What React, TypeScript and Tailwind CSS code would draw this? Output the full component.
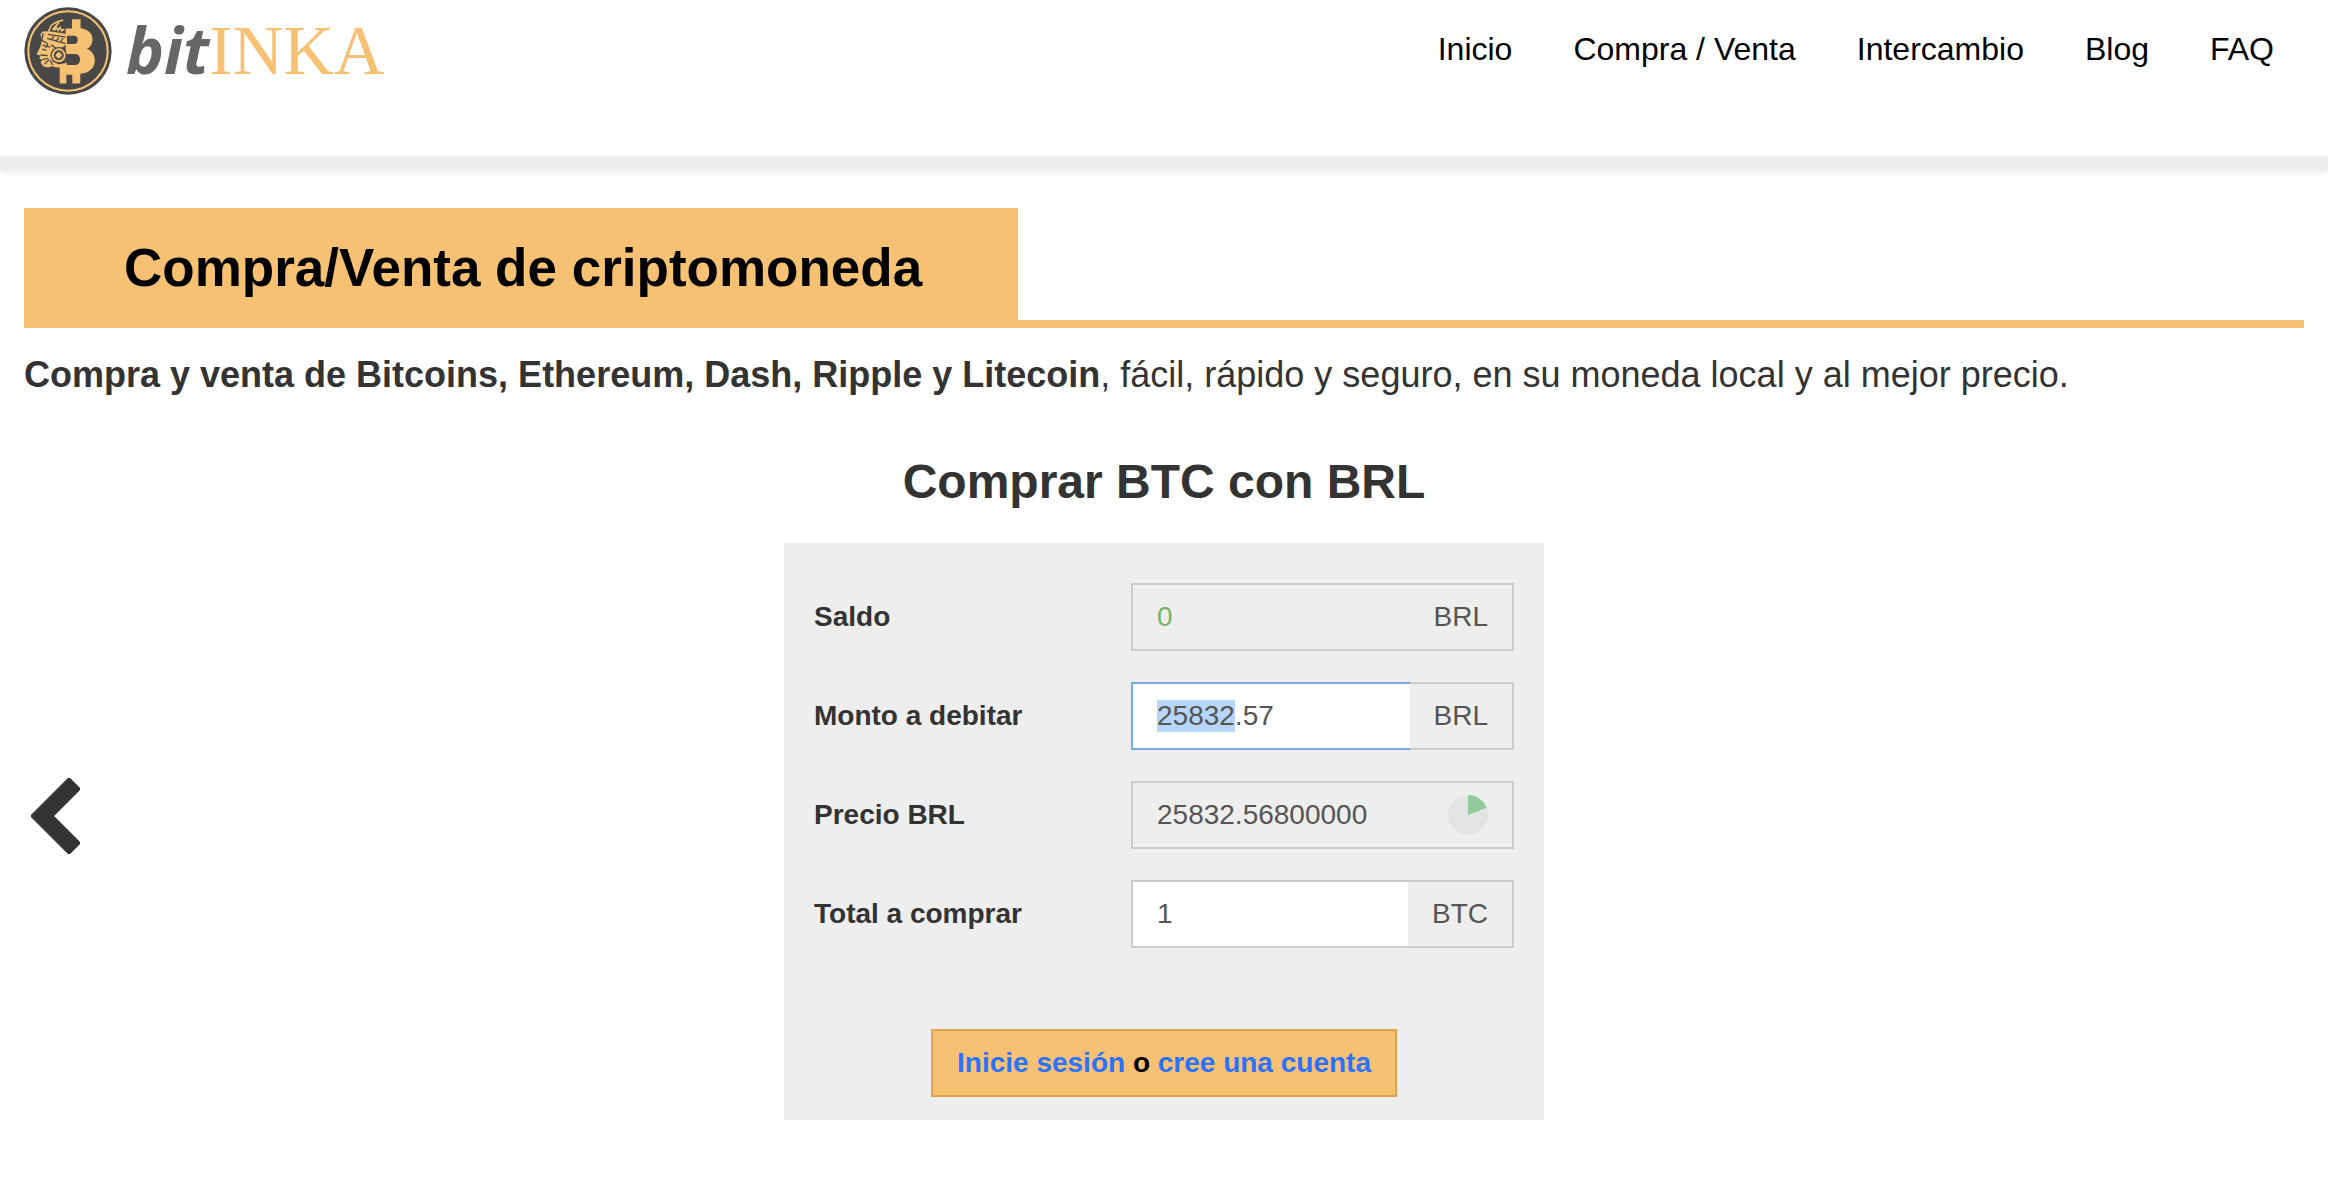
import { useEffect, useRef, useState } from 'react'
import { clsx } from 'clsx'

const navLinks = ['Inicio', 'Compra / Venta', 'Intercambio', 'Blog', 'FAQ']

function LogoMark() {
  return (
    <svg viewBox="12 17 266 266" className="size-[88px] shrink-0" aria-hidden="true">
      <circle cx="145" cy="150" r="132" fill="#484848" />
      <circle cx="145" cy="150" r="120" fill="none" stroke="#f6c172" strokeWidth="6" />
      {/* bitcoin sign */}
      <path
        fill="#f6c172"
        d="M157 54h26v27c24 3 36 17 36 32 0 16-6 25-17 30 16 6 24 20 24 36 0 22-16 38-44 40v29h-24v-26h-18v26h-20v-54h18V82h19z"
      />
      <path fill="#484848" d="M142 104h22c14 0 14 25 0 25h-22zM138 159h30c18 0 18 33 0 33h-30z" />
      {/* face */}
      <path
        fill="#f6c172"
        d="M62 100c0-6 6-10 14-10l24 2 38 6 4 30-12 10-18 6-16 14 2 22 18 10 26-4v10c-18 6-34 4-44 0l-14 4-14-4-8-12 6-6-10-6 4-8-12-4 12-24 4-16z"
      />
      <g fill="none" stroke="#f6c172" strokeWidth="5">
        <path d="M87 92c2-12 6-20 14-24s16-10 30-11M98 86l20-22M104 88l6-9 5 9 6-9 5 10 8-6" />
      </g>
      <g fill="none" stroke="#484848" strokeWidth="4">
        <path d="M70 96l-4 22 18 10M84 100l54 8M82 112l56 16M96 114l6-8M110 118l8-8M124 121l6-10" />
        <path d="M68 132l24 6M84 128l-6 12M66 144l14 4M94 130l14 12 12 2M62 162l22 2M68 176l18-4M74 190l14-14M90 178l10 14" />
      </g>
      <circle cx="117" cy="163" r="25" fill="#484848" />
      <circle cx="117" cy="163" r="18" fill="none" stroke="#f6c172" strokeWidth="6" />
      <path d="M117 154v18M108 163h18" stroke="#f6c172" strokeWidth="9" />
    </svg>
  )
}

function Header() {
  return (
    <header className="border-b-[14px] border-[#ededed] shadow-[0_3px_5px_#ededed]">
      <div className="flex h-[156px] items-start justify-between pl-6 pr-[54px]">
        <a href="#" className="flex items-center gap-[14px] pt-[6px]">
          <LogoMark />
          <span className="flex items-baseline leading-[88px]">
            <span className="font-['Open_Sans',sans-serif] text-[64px] font-bold italic text-[#666]">bit</span>
            <span className="font-['Liberation_Serif',serif] text-[70px] text-[#f6c172]">INKA</span>
          </span>
        </a>
        <nav className="flex gap-[61px] pt-[29px] text-[32px] leading-10 text-black">
          {navLinks.map((label) => (
            <a key={label} href="#">
              {label}
            </a>
          ))}
        </nav>
      </div>
    </header>
  )
}

// Share of the refresh interval that has gone by
function RefreshPie() {
  return (
    <svg viewBox="0 0 40 40" className="mr-6 size-10 shrink-0" aria-hidden="true">
      <circle cx="20" cy="20" r="20" fill="#e4e4e4" />
      <path d="M20 20V0a20 20 0 0 1 18.6 12.7z" fill="#92cb9b" />
    </svg>
  )
}

interface FieldProps {
  id: string
  label: string
  value: string
  unit?: string
  readOnly?: boolean
  valueClass?: string
  onChange?: (value: string) => void
  inputRef?: React.Ref<HTMLInputElement>
}

function Field({ id, label, value, unit, readOnly, valueClass = 'text-[#555]', onChange, inputRef }: FieldProps) {
  return (
    <div className="flex items-center">
      <label htmlFor={id} className="flex-1 font-bold">
        {label}
      </label>
      <div className="flex h-[68px] w-[383px] items-center border-2 border-[#ccc]">
        <input
          ref={inputRef}
          id={id}
          type="text"
          value={value}
          readOnly={readOnly}
          onChange={(e) => onChange?.(e.target.value)}
          className={clsx(
            '-my-[2px] -ml-[2px] h-[68px] min-w-0 flex-1 border-y-2 border-l-2 border-[#ccc] px-6 leading-9 outline-none focus:border-[#74ace4] selection:bg-[#b7d6fc] selection:text-[#555]',
            readOnly ? 'bg-transparent' : 'bg-white',
            valueClass
          )}
        />
        {unit ? <span className="px-6 text-[#555]">{unit}</span> : <RefreshPie />}
      </div>
    </div>
  )
}

export default function App() {
  const [amount, setAmount] = useState('25832.57')
  const [total, setTotal] = useState('1')
  const amountRef = useRef<HTMLInputElement>(null)

  useEffect(() => {
    amountRef.current?.focus()
    amountRef.current?.setSelectionRange(0, 5)
  }, [])

  return (
    <div className="bg-white font-['Liberation_Sans',Arial,sans-serif] text-[28px] leading-9 text-[#333]">
      <Header />
      <main className="px-6 pt-[38px]">
        <div className="flex border-b-8 border-[#f6c172]">
          <h1 className="bg-[#f6c172] pt-[30px] pr-24 pb-[22px] pl-[100px] text-[53px] leading-[60px] font-bold text-black">
            Compra/Venta de criptomoneda
          </h1>
        </div>
        <p className="mt-5 text-[36px] leading-[54px]">
          <b>Compra y venta de Bitcoins, Ethereum, Dash, Ripple y Litecoin</b>, fácil, rápido y seguro, en su moneda
          local y al mejor precio.
        </p>

        <section className="mt-[50px] grid grid-cols-3 items-center">
          <button type="button" aria-label="Anterior" className="ml-[7px] justify-self-start">
            <svg viewBox="0 0 49 76" className="h-[76px] w-[49px]">
              <path
                d="M3 38L38 3l8 8-27 27 27 27-8 8z"
                fill="#333"
                stroke="#333"
                strokeWidth="6"
                strokeLinejoin="round"
              />
            </svg>
          </button>
          <div className="pb-[60px]">
            <h2 className="text-center text-[48px] leading-[60px] font-bold">Comprar BTC con BRL</h2>
            <form className="mt-[31px] bg-[#eee] px-[30px] pt-10 pb-[23px]">
              <div className="flex flex-col gap-[31px]">
                <Field id="saldo" label="Saldo" value="0" unit="BRL" readOnly valueClass="text-[#72b566]" />
                <Field
                  id="monto"
                  label="Monto a debitar"
                  value={amount}
                  unit="BRL"
                  onChange={setAmount}
                  inputRef={amountRef}
                />
                <Field id="precio" label="Precio BRL" value="25832.56800000" readOnly />
                <Field id="total" label="Total a comprar" value={total} unit="BTC" onChange={setTotal} />
              </div>
              <div className="mx-auto mt-[81px] w-fit border-2 border-[#e3a24b] bg-[#f6c172] px-6 py-[14px] font-bold text-black">
                <a href="#" className="text-[#2a72ff]">
                  Inicie sesión
                </a>{' '}
                o{' '}
                <a href="#" className="text-[#2a72ff]">
                  cree una cuenta
                </a>
              </div>
            </form>
          </div>
        </section>
      </main>
    </div>
  )
}
